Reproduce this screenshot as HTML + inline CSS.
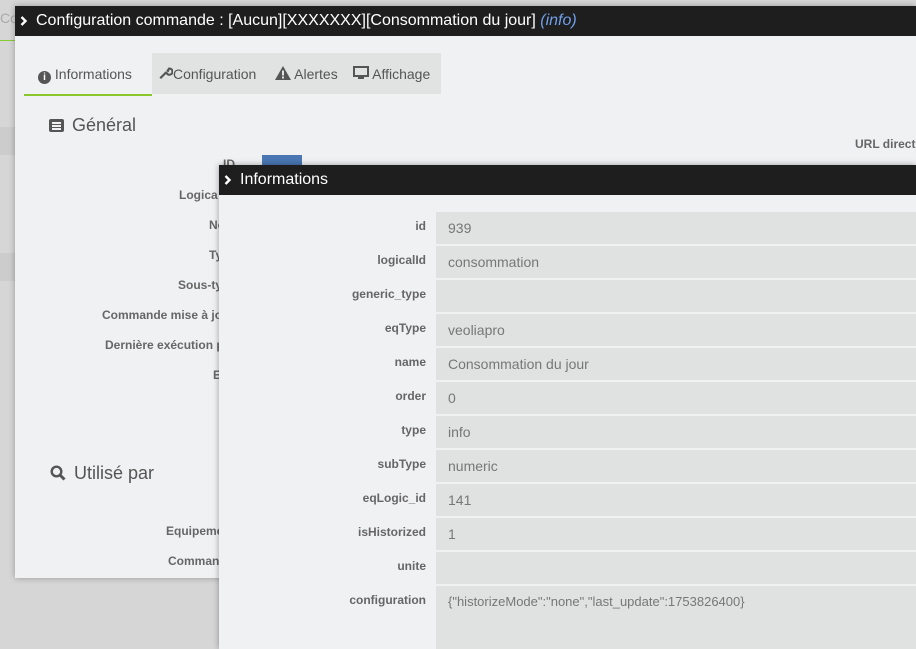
<!DOCTYPE html>
<html><head><meta charset="utf-8"><style>
*{box-sizing:border-box;margin:0;padding:0}
body{width:916px;height:649px;overflow:hidden;background:#d6d6d6;font-family:"Liberation Sans",sans-serif;position:relative}
.m1{position:absolute;left:15px;top:6px;width:901px;height:572px;background:#f0f1f3;box-shadow:0 0 6px rgba(0,0,0,.3)}
.hd{height:30px;background:#1e1e1e;color:#fff;font-size:16px;line-height:30px;padding-left:21px;position:relative}
.hd svg{position:absolute;left:5px;top:10px}
.hd i{color:#6fa0e8}
.tab{position:absolute;top:47px;height:42px;line-height:42px;font-size:14px;color:#555}
.lbl{position:absolute;font-size:12px;font-weight:bold;color:#666;text-align:right}
.m2{position:absolute;left:219px;top:165px;width:697px;height:484px;background:#f0f1f3;box-shadow:0 0 6px rgba(0,0,0,.35);overflow:hidden}
.row{position:absolute;left:217px;width:480px;height:32px;background:#e0e1e1;font-size:14px;color:#777;padding-left:12px;line-height:32px}
.rl{position:absolute;right:490px;font-size:12px;font-weight:bold;color:#666;text-align:right}
</style></head><body>
<div style="position:absolute;left:0;top:10px;font-size:14px;color:#aaa">Co</div>
<div style="position:absolute;left:0;top:40px;width:15px;height:1px;background:#8c3"></div>
<div style="position:absolute;left:0;top:127px;width:15px;height:28px;background:#ccc"></div>
<div style="position:absolute;left:0;top:253px;width:15px;height:28px;background:#ccc"></div>
<div class="m1">
<div class="hd"><svg width="8" height="10" viewBox="0 0 8 10"><path d="M1.5 1L5.5 5L1.5 9" stroke="#fff" stroke-width="2.4" fill="none"/></svg>Configuration commande : [Aucun][XXXXXXX][Consommation du jour] <i>(info)</i></div>
<div style="position:absolute;left:137px;top:47px;width:289px;height:41px;background:#e1e2e2"></div>
<div style="position:absolute;left:9px;top:88px;width:128px;height:2px;background:#8bc72b"></div>
<div class="tab" style="left:23px"><span style="display:inline-block;width:13px;height:13px;border-radius:50%;background:#555;color:#fff;font-size:10px;line-height:13px;text-align:center;font-weight:bold;vertical-align:-1px">i</span> Informations</div>
<div class="tab" style="left:143px"><svg width="15" height="14" viewBox="0 0 16 16" style="vertical-align:-1px"><path d="M2 14L9 7M9 7A3.5 3.5 0 1 0 12 3L10.5 5.5L12 6" stroke="#555" stroke-width="2.5" fill="none"/></svg>Configuration</div>
<div class="tab" style="left:260px"><svg width="16" height="14" viewBox="0 0 16 14" style="vertical-align:-1px"><path d="M8 0L16 14H0Z" fill="#555"/><rect x="7" y="4.5" width="2" height="5" fill="#e1e2e2"/><rect x="7" y="10.5" width="2" height="2" fill="#e1e2e2"/></svg> Alertes</div>
<div class="tab" style="left:338px"><svg width="16" height="14" viewBox="0 0 16 14" style="vertical-align:-1px"><rect x="1" y="1" width="14" height="9" stroke="#555" stroke-width="2" fill="none"/><rect x="5" y="11" width="6" height="2" fill="#555"/></svg> Affichage</div>
<div style="position:absolute;left:34px;top:113px;width:15px;height:13px;background:#555;border-radius:2px"></div>
<div style="position:absolute;left:37px;top:116px;width:9px;height:1.5px;background:#f0f1f3;box-shadow:0 3px 0 #f0f1f3,0 6px 0 #f0f1f3"></div>
<div style="position:absolute;left:57px;top:109px;font-size:18px;color:#555">Général</div>
<div style="position:absolute;left:840px;top:131px;font-size:12px;font-weight:bold;color:#666">URL direct</div>
<div class="lbl" style="left:208px;top:151px">ID</div>
<div style="position:absolute;left:247px;top:149px;width:40px;height:12px;background:#4a77b4"></div>
<div class="lbl" style="left:164px;top:182px">Logica</div>
<div class="lbl" style="left:194px;top:212px">No</div>
<div class="lbl" style="left:194px;top:242px">Ty</div>
<div class="lbl" style="left:163px;top:272px">Sous-ty</div>
<div class="lbl" style="left:87px;top:302px">Commande mise à jo</div>
<div class="lbl" style="left:90px;top:332px">Dernière exécution p</div>
<div class="lbl" style="left:198px;top:362px">E</div>
<svg style="position:absolute;left:35px;top:459px" width="16" height="16" viewBox="0 0 16 16"><circle cx="6.5" cy="6.5" r="4.8" stroke="#555" stroke-width="2.4" fill="none"/><path d="M10 10L14.5 14.5" stroke="#555" stroke-width="3"/></svg>
<div style="position:absolute;left:59px;top:457px;font-size:18px;color:#555">Utilisé par</div>
<div class="lbl" style="left:151px;top:518px">Equipeme</div>
<div class="lbl" style="left:153px;top:548px">Comman</div>
</div>
<div class="m2">
<div class="hd"><svg width="8" height="10" viewBox="0 0 8 10"><path d="M1.5 1L5.5 5L1.5 9" stroke="#fff" stroke-width="2.4" fill="none"/></svg>Informations</div>
<div class="rl" style="top:54px">id</div><div class="row" style="top:47px">939</div>
<div class="rl" style="top:88px">logicalId</div><div class="row" style="top:81px">consommation</div>
<div class="rl" style="top:122px">generic_type</div><div class="row" style="top:115px"></div>
<div class="rl" style="top:156px">eqType</div><div class="row" style="top:149px">veoliapro</div>
<div class="rl" style="top:190px">name</div><div class="row" style="top:183px">Consommation du jour</div>
<div class="rl" style="top:224px">order</div><div class="row" style="top:217px">0</div>
<div class="rl" style="top:258px">type</div><div class="row" style="top:251px">info</div>
<div class="rl" style="top:292px">subType</div><div class="row" style="top:285px">numeric</div>
<div class="rl" style="top:326px">eqLogic_id</div><div class="row" style="top:319px">141</div>
<div class="rl" style="top:360px">isHistorized</div><div class="row" style="top:353px">1</div>
<div class="rl" style="top:394px">unite</div><div class="row" style="top:387px"></div>
<div class="rl" style="top:428px">configuration</div><div class="row" style="top:421px;height:70px;font-size:13px">{"historizeMode":"none","last_update":1753826400}</div>
</div>
</body></html>
